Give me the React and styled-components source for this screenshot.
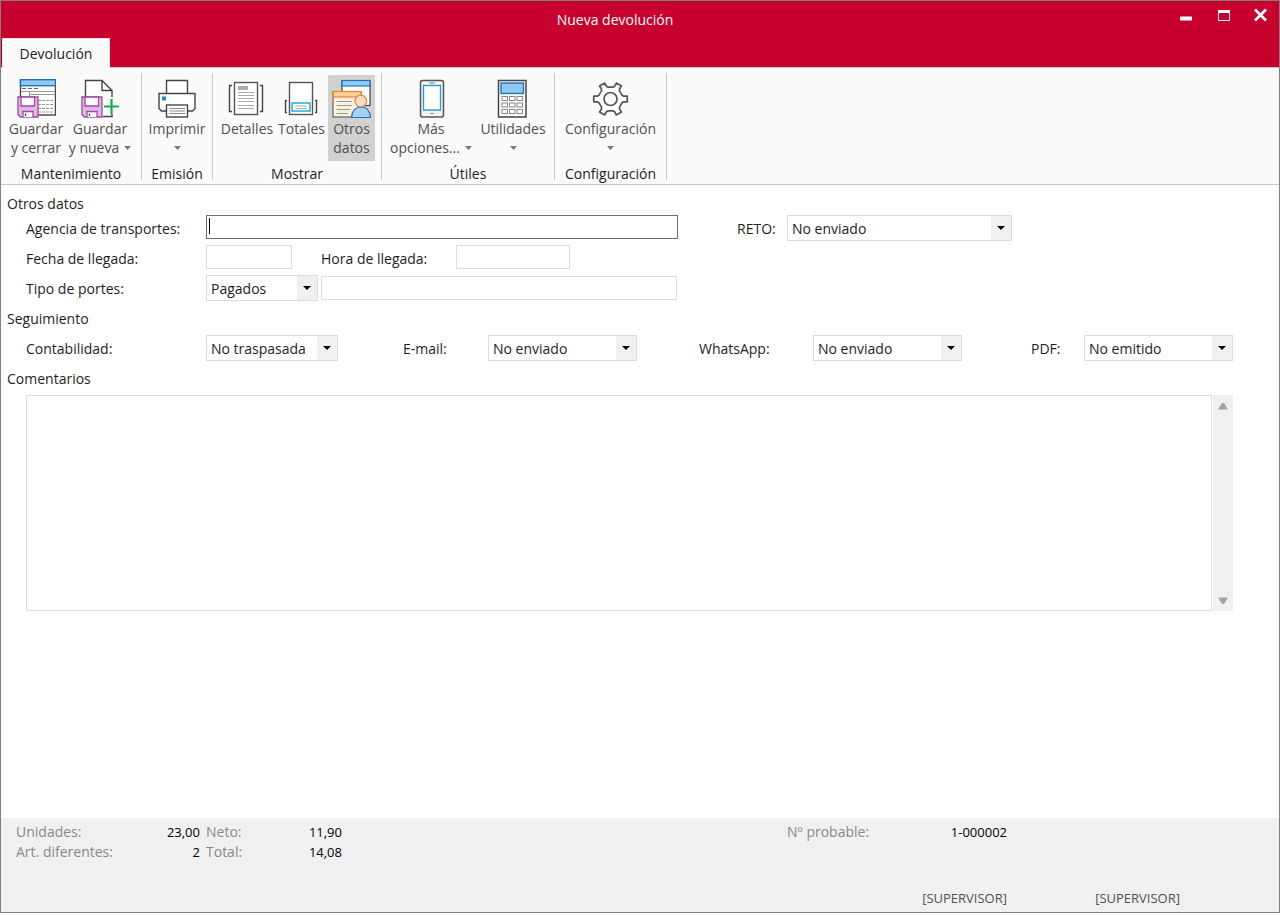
import React from 'react';
import styled, { createGlobalStyle } from 'styled-components';

const COLORS = {
    red: '#c8002d',
    frame: '#808080',
    ribbon: '#fafafa',
    line: '#c8c8c8',
    field: '#dcdcdc',
    panel: '#f0f0f0',
    active: '#d1d1d1',
    ink: '#444444',
    text: '#1e1e1e',
    muted: '#8c8888',
    blue: '#1e74bc',
    sky: '#91c8f0',
    purple: '#a349a4',
    lilac: '#dfb9e0',
};

const GlobalStyle = createGlobalStyle`
    *, *::before, *::after {
        box-sizing: border-box;
    }

    body {
        margin: 0;
        font-family: 'Open Sans', 'Noto Sans', sans-serif;
        font-size: 14px;
        line-height: 20px;
        color: ${COLORS.text};
        background: white;
    }

    button, input, select, textarea {
        font: inherit;
        color: inherit;
    }
`;

const Floppy = () => (
    <g stroke={COLORS.purple} strokeWidth='1.3'>
        <path d='M2 18H22V38H4.5L2 35.5Z' fill={COLORS.lilac} />
        <path d='M5 18H18.5V27H5Z' fill='white' />
        <path d='M7 38V32.5H17V38' fill='white' />
        <path d='M9.5 34.5V37' stroke={COLORS.ink} />
    </g>
);

const SaveCloseIcon = () => (
    <Icon viewBox='0 0 40 40'>
        <rect x='4.5' y='1' width='35' height='35' fill='white' stroke={COLORS.ink} strokeWidth='1.4' />
        <rect x='4.5' y='0.7' width='35' height='6' fill={COLORS.sky} stroke={COLORS.blue} strokeWidth='1.4' />
        <path d='M6 9.5H23' stroke='#666' strokeDasharray='4 2' />
        <path d='M5 12.5H39M13.5 13V18M13 15.5H39' stroke='#999' />
        <path d='M22 21.5H37M22 25.5H37M22 29.5H37M22 33H37' stroke='#999' strokeDasharray='3 1' />
        <Floppy />
    </Icon>
);

const SaveNewIcon = () => (
    <Icon viewBox='0 0 40 40'>
        <path d='M5.5 18V1.5H22L32 11.5V37.5H5.5Z' fill='white' />
        <path d='M5.5 18V1.5H22L32 11.5V18M22 1.5V11.5H32M23 37.5H32V35' stroke={COLORS.ink} strokeWidth='1.4' />
        <Floppy />
        <path d='M31.5 20V35M24 27.5H39' stroke='#12b04c' strokeWidth='2.2' />
    </Icon>
);

const PrinterIcon = () => (
    <Icon viewBox='0 0 40 40'>
        <g fill='white' stroke={COLORS.ink} strokeWidth='1.4'>
            <path d='M9.5 14.5V1.5H30.5V14.5' />
            <path d='M2 14.5H38V29.5L35.5 32H4.5L2 29.5Z' />
            <rect x='9.5' y='26' width='21' height='12' />
        </g>
        <rect x='5' y='17.5' width='4' height='4' fill='#1e88d2' />
        <path d='M12.5 29.5H28M12.5 32H28M12.5 34.5H28' stroke='#888' />
    </Icon>
);

const DetailsIcon = () => (
    <Icon viewBox='0 0 40 40'>
        <rect x='7.5' y='3.5' width='23' height='32' fill='white' stroke='#555' strokeWidth='1.4' />
        <path d='M5 6.5H2.5V32.5H5M33 6.5H35.5V32.5H33' stroke={COLORS.ink} strokeWidth='1.4' />
        <rect x='11' y='7' width='10' height='4' fill='#aaa' />
        <path d='M11 13.5H27M11 16.5H27M11 19.5H27M11 22.5H27M11 26.5H27M11 29.5H27' stroke='#aaa' />
    </Icon>
);

const TotalsIcon = () => (
    <Icon viewBox='0 0 40 40'>
        <rect x='7.5' y='3.5' width='23' height='32' fill='white' stroke='#555' strokeWidth='1.4' />
        <path d='M5 21.5H3.5V33.5H5M33 21.5H34.5V33.5H33' stroke={COLORS.ink} strokeWidth='1.4' />
        <rect x='10' y='24' width='18' height='8' fill='white' stroke='#1ba1e2' strokeWidth='1.4' />
        <path d='M13.5 27H24.5M13.5 29.5H24.5' stroke='#aaa' />
    </Icon>
);

const OtherDataIcon = () => (
    <Icon viewBox='0 0 40 40'>
        <rect x='10' y='2' width='28' height='24.5' fill='white' stroke={COLORS.ink} strokeWidth='1.2' />
        <rect x='10' y='1.5' width='28' height='5.5' fill={COLORS.sky} stroke={COLORS.blue} strokeWidth='1.2' />
        <rect x='1' y='13' width='28' height='25' fill='#fcf1dc' stroke='#666' strokeWidth='1.2' />
        <rect x='1' y='12.5' width='28' height='5.5' fill='#fbd08c' stroke='#e8833a' strokeWidth='1.2' />
        <path d='M4.5 22.5H20M4.5 26.5H20M4.5 30.5H18M4.5 34.5H16' stroke='#999' strokeWidth='1.2' />
        <path d='M19.5 38.5C20 32 22.5 28 29 28S38 32 38.5 38.5Z' fill='#a6cff0' stroke={COLORS.blue} strokeWidth='1.2' />
        <circle cx='28.8' cy='22' r='5.8' fill='#fbdcc0' stroke='#cf8a55' strokeWidth='1.2' />
    </Icon>
);

const PhoneIcon = () => (
    <Icon viewBox='0 0 40 40'>
        <rect x='9.5' y='1.5' width='23' height='36.5' rx='2' fill='#f4f4f4' stroke='#555' strokeWidth='1.5' />
        <rect x='12.5' y='6.5' width='17' height='24.5' fill='white' stroke='#2f9ad6' strokeWidth='1.4' />
        <path d='M18.5 4H23.5M19.5 34.5H22.5' stroke='#777' strokeWidth='1.2' />
    </Icon>
);

const CalculatorIcon = () => (
    <Icon viewBox='0 0 40 40'>
        <rect x='5.5' y='1.5' width='27.5' height='36.5' fill='white' stroke='#444' strokeWidth='1.5' />
        <rect x='8' y='4' width='22.5' height='10.5' fill={COLORS.sky} stroke={COLORS.blue} strokeWidth='1.4' />
        {[17.5, 24, 30.5].map((y) =>
            [9, 16.5, 24].map((x) => (
                <rect key={`${x}-${y}`} x={x} y={y} width='5.5' height='4' fill='white' stroke='#888' />
            ))
        )}
    </Icon>
);

// six teeth, one every 60 degrees
const gearPath = () => {
    const point = (angle, radius) => {
        const a = (angle * Math.PI) / 180;
        return `${(19.5 + radius * Math.cos(a)).toFixed(2)} ${(20 + radius * Math.sin(a)).toFixed(2)}`;
    };
    let d = '';
    for (let i = 0; i < 6; i++) {
        const a = i * 60;
        d += `${i ? 'L' : 'M'}${point(a - 19, 12)}L${point(a - 12, 13.5)}L${point(a - 10, 17)}`;
        d += `L${point(a + 10, 17)}L${point(a + 12, 13.5)}L${point(a + 19, 12)}`;
        d += `Q${point(a + 30, 12)} ${point(a + 41, 12)}`;
    }
    return d + 'Z';
};

const GearIcon = () => (
    <Icon viewBox='0 0 40 40'>
        <path d={gearPath()} fill='white' stroke='#555' strokeWidth='1.7' strokeLinejoin='round' />
        <circle cx='19.5' cy='20' r='6.5' fill={COLORS.ribbon} stroke='#555' strokeWidth='1.7' />
    </Icon>
);

const Caret = () => (
    <CaretSvg viewBox='0 0 7 4'>
        <path d='M0 0H7L3.5 4Z' fill='#777' />
    </CaretSvg>
);

const GROUPS = [
    {
        title: 'Mantenimiento',
        width: 140,
        endSpace: 6,
        tools: [
            { icon: SaveCloseIcon, lines: ['Guardar', 'y cerrar'], width: 64 },
            { icon: SaveNewIcon, lines: ['Guardar', 'y nueva'], width: 64, menu: true },
        ],
    },
    {
        title: 'Emisión',
        width: 70,
        tools: [{ icon: PrinterIcon, lines: ['Imprimir'], width: 64, menu: true }],
    },
    {
        title: 'Mostrar',
        width: 168,
        tools: [
            { icon: DetailsIcon, lines: ['Detalles'], width: 56 },
            { icon: TotalsIcon, lines: ['Totales'], width: 53 },
            { icon: OtherDataIcon, lines: ['Otros', 'datos'], width: 47, active: true },
        ],
    },
    {
        title: 'Útiles',
        width: 172,
        tools: [
            { icon: PhoneIcon, lines: ['Más', 'opciones...'], width: 90, menu: true },
            { icon: CalculatorIcon, lines: ['Utilidades'], width: 74, menu: true },
        ],
    },
    {
        title: 'Configuración',
        width: 111,
        tools: [{ icon: GearIcon, lines: ['Configuración'], width: 100, menu: true }],
    },
];

const Tool = ({ icon: ToolIcon, lines, width, menu, active }) => (
    <ToolButton type='button' $width={width} $active={active}>
        <ToolIcon />
        <ToolLine>{lines[0]}</ToolLine>
        <ToolLine>
            {lines[1]}
            {menu && <Caret />}
        </ToolLine>
    </ToolButton>
);

const Dropdown = ({ id, value, width }) => (
    <DropdownWrapper $width={width}>
        <Select id={id} defaultValue={value}>
            <option>{value}</option>
        </Select>
        <DropdownArrow viewBox='0 0 8 4'>
            <path d='M0 0H8L4 4Z' fill='black' />
        </DropdownArrow>
    </DropdownWrapper>
);

const App = () => (
    <Window>
        <GlobalStyle />
        <TitleBar>
            <TitleRow>
                <Title>Nueva devolución</Title>
                <WindowButton type='button' aria-label='Minimizar'>
                    <ControlIcon viewBox='0 0 14 14'>
                        <path d='M0 10.5H12' stroke='white' strokeWidth='4' />
                    </ControlIcon>
                </WindowButton>
                <WindowButton type='button' aria-label='Maximizar'>
                    <ControlIcon viewBox='0 0 14 14'>
                        <path d='M1.5 2V12.5H12.5V2' stroke='white' />
                        <path d='M1 3.5H13' stroke='white' strokeWidth='3' />
                    </ControlIcon>
                </WindowButton>
                <WindowButton type='button' aria-label='Cerrar'>
                    <ControlIcon viewBox='0 0 14 14'>
                        <path d='M1 1.5L12 12.5M12 1.5L1 12.5' stroke='white' strokeWidth='2.8' />
                    </ControlIcon>
                </WindowButton>
            </TitleRow>
            <Tab type='button'>Devolución</Tab>
        </TitleBar>

        <Ribbon>
            {GROUPS.map((group) => (
                <React.Fragment key={group.title}>
                    <Group $width={group.width}>
                        <Tools $endSpace={group.endSpace}>
                            {group.tools.map((tool) => (
                                <Tool key={tool.lines.join(' ')} {...tool} />
                            ))}
                        </Tools>
                        <GroupTitle>{group.title}</GroupTitle>
                    </Group>
                    <Divider />
                </React.Fragment>
            ))}
        </Ribbon>

        <Form>
            <Heading $first>Otros datos</Heading>
            <Row>
                <Field>
                    <Label htmlFor='agencia' $width={180}>Agencia de transportes:</Label>
                    <FocusedField>
                        <Input id='agencia' type='text' $focused />
                    </FocusedField>
                </Field>
                <Field $end>
                    <Label htmlFor='reto' $width={50}>RETO:</Label>
                    <Dropdown id='reto' value='No enviado' width={225} />
                </Field>
            </Row>
            <Row>
                <Field>
                    <Label htmlFor='fecha' $width={180}>Fecha de llegada:</Label>
                    <Input id='fecha' type='text' $width={86} />
                    <Spacer />
                    <Label htmlFor='hora' $width={135}>Hora de llegada:</Label>
                    <Input id='hora' type='text' $width={114} />
                </Field>
            </Row>
            <Row>
                <Field>
                    <Label htmlFor='portes' $width={180}>Tipo de portes:</Label>
                    <Dropdown id='portes' value='Pagados' width={112} />
                    <PortesInput type='text' aria-label='Detalle de portes' />
                </Field>
            </Row>

            <Heading>Seguimiento</Heading>
            <TrackingRow>
                <Field>
                    <Label htmlFor='contabilidad' $width={180}>Contabilidad:</Label>
                    <Dropdown id='contabilidad' value='No traspasada' width={132} />
                </Field>
                <Field $end>
                    <Label htmlFor='email' $width={85}>E-mail:</Label>
                    <Dropdown id='email' value='No enviado' width={149} />
                </Field>
                <Field $end>
                    <Label htmlFor='whatsapp' $width={114}>WhatsApp:</Label>
                    <Dropdown id='whatsapp' value='No enviado' width={149} />
                </Field>
                <Field $end>
                    <Label htmlFor='pdf' $width={53}>PDF:</Label>
                    <Dropdown id='pdf' value='No emitido' width={149} />
                </Field>
            </TrackingRow>

            <Heading as='label' htmlFor='comentarios'>Comentarios</Heading>
            <Comments>
                <TextArea id='comentarios' />
                <ScrollBar>
                    <ScrollArrow viewBox='0 0 12 8'>
                        <path d='M1 7.5L5 1H7L11 7.5Z' fill='#a3a3a3' />
                    </ScrollArrow>
                    <ScrollArrow viewBox='0 0 12 8'>
                        <path d='M1 0.5L5 7H7L11 0.5Z' fill='#a3a3a3' />
                    </ScrollArrow>
                </ScrollBar>
            </Comments>
        </Form>

        <Footer>
            <Stats>
                <Stat><dt>Unidades:</dt><dd>23,00</dd></Stat>
                <Stat><dt>Art. diferentes:</dt><dd>2</dd></Stat>
            </Stats>
            <Stats>
                <Stat><dt>Neto:</dt><dd>11,90</dd></Stat>
                <Stat><dt>Total:</dt><dd>14,08</dd></Stat>
            </Stats>
            <Stats $column={4}>
                <Stat><dt>Nº probable:</dt><dd>1-000002</dd></Stat>
            </Stats>
            <User $column={4}>[SUPERVISOR]</User>
            <User $column={5}>[SUPERVISOR]</User>
        </Footer>
    </Window>
);

const Window = styled.div`
    display: flex;
    flex-direction: column;
    min-height: 100vh;
    border: 1px solid ${COLORS.frame};
`;

const TitleBar = styled.header`
    background: ${COLORS.red};
    padding-left: 1px;
`;

const TitleRow = styled.div`
    display: flex;
    align-items: flex-start;
    padding-left: 60px;
`;

const Title = styled.h1`
    flex: 1;
    margin: 0;
    font-size: 14px;
    font-weight: 400;
    line-height: 37px;
    text-align: center;
    color: white;
`;

const WindowButton = styled.button`
    display: grid;
    place-items: center;
    width: 37px;
    height: 28px;
    padding: 0;
    border: 0;
    background: none;
`;

const ControlIcon = styled.svg`
    width: 14px;
    height: 14px;
    fill: none;
`;

const Tab = styled.button`
    display: block;
    position: relative;
    width: 108px;
    height: 30px;
    margin-bottom: -1px;
    padding: 0;
    border: 1px solid #e4e4e4;
    border-bottom: 0;
    background: ${COLORS.ribbon};
`;

const Ribbon = styled.div`
    display: flex;
    background: ${COLORS.ribbon};
    border-top: 1px solid ${COLORS.line};
    border-bottom: 1px solid ${COLORS.line};
`;

const Group = styled.section`
    width: ${(p) => p.$width}px;
    padding-top: 7px;
`;

const Tools = styled.div`
    display: flex;
    justify-content: center;
    padding-right: ${(p) => p.$endSpace || 0}px;
`;

const GroupTitle = styled.h2`
    margin: 3px 0 0;
    font-size: 14px;
    font-weight: 400;
    line-height: 20px;
    text-align: center;
`;

const Divider = styled.div`
    width: 1px;
    margin: 5px 0 4px;
    background: ${COLORS.line};
`;

const ToolButton = styled.button`
    display: flex;
    flex-direction: column;
    align-items: center;
    width: ${(p) => p.$width}px;
    height: 86px;
    padding: 4px 0;
    border: 0;
    background: ${(p) => (p.$active ? COLORS.active : 'none')};
    color: #505050;
    white-space: nowrap;
`;

const ToolLine = styled.span`
    display: flex;
    align-items: center;
    gap: 5px;
    height: 19px;
    line-height: 19px;
`;

const Icon = styled.svg`
    width: 40px;
    height: 40px;
    fill: none;
`;

const CaretSvg = styled.svg`
    width: 7px;
    height: 4px;
`;

const Form = styled.main`
    flex: 1;
    padding: 9px 46px 24px 25px;
`;

const Heading = styled.h2`
    display: block;
    margin: 0 0 0 -19px;
    font-size: 14px;
    font-weight: 400;
    line-height: ${(p) => (p.$first ? 20 : 30)}px;
`;

const Row = styled.div`
    display: grid;
    grid-template-columns: 652fr 334fr 221fr;
    height: 30px;
    padding-top: 1px;
`;

const TrackingRow = styled(Row)`
    grid-template-columns: 312fr 299fr 325fr 271fr;
`;

const Field = styled.div`
    display: flex;
    align-items: flex-start;
    justify-content: ${(p) => (p.$end ? 'flex-end' : 'flex-start')};
`;

const Label = styled.label`
    flex: none;
    width: ${(p) => p.$width}px;
    line-height: 28px;
`;

const Spacer = styled.div`
    width: 29px;
`;

const Input = styled.input`
    width: ${(p) => (p.$width ? p.$width + 'px' : '100%')};
    height: 24px;
    padding: 0 4px;
    border: 1px solid ${(p) => (p.$focused ? '#6e6e6e' : COLORS.field)};
    background: white;
    outline: none;
`;

const PortesInput = styled(Input)`
    flex: 1;
    min-width: 0;
    margin: 1px 1px 0 3px;
`;

const FocusedField = styled.div`
    position: relative;
    flex: 1;

    &::after {
        content: '';
        position: absolute;
        left: 3px;
        top: 3px;
        width: 1px;
        height: 16px;
        background: black;
    }
`;

const DropdownWrapper = styled.div`
    position: relative;
    flex: none;
    width: ${(p) => p.$width}px;
`;

const Select = styled.select`
    display: block;
    appearance: none;
    width: 100%;
    height: 26px;
    padding: 2px 24px 0 4px;
    border: 1px solid ${COLORS.field};
    border-radius: 0;
    background: linear-gradient(${COLORS.panel}, ${COLORS.panel}) right / 20px 100% no-repeat white;
    outline: none;
`;

const DropdownArrow = styled.svg`
    position: absolute;
    right: 7px;
    top: 11px;
    width: 8px;
    height: 4px;
    pointer-events: none;
`;

const Comments = styled.div`
    display: flex;
    gap: 1px;
    height: 216px;
    margin-top: 1px;
`;

const TextArea = styled.textarea`
    flex: 1;
    resize: none;
    padding: 4px;
    border: 1px solid ${COLORS.field};
    outline: none;
`;

const ScrollBar = styled.div`
    display: flex;
    flex-direction: column;
    justify-content: space-between;
    align-items: center;
    width: 20px;
    padding: 7px 0 6px;
    background: ${COLORS.panel};
`;

const ScrollArrow = styled.svg`
    width: 12px;
    height: 8px;
`;

const Footer = styled.footer`
    display: grid;
    grid-template-columns: 184px 136px 1fr 220px 167px;
    column-gap: 6px;
    row-gap: 26px;
    padding: 4px 99px 4px 15px;
    background: ${COLORS.panel};
`;

const Stats = styled.dl`
    grid-column: ${(p) => p.$column || 'auto'};
    margin: 0;
`;

const Stat = styled.div`
    display: flex;
    justify-content: space-between;

    dt {
        color: ${COLORS.muted};
    }

    dd {
        margin: 0;
        font-size: 13px;
        color: black;
    }
`;

const User = styled.span`
    grid-column: ${(p) => p.$column};
    grid-row: 2;
    font-size: 13px;
    text-align: right;
    color: #505050;
`;

export default App;
